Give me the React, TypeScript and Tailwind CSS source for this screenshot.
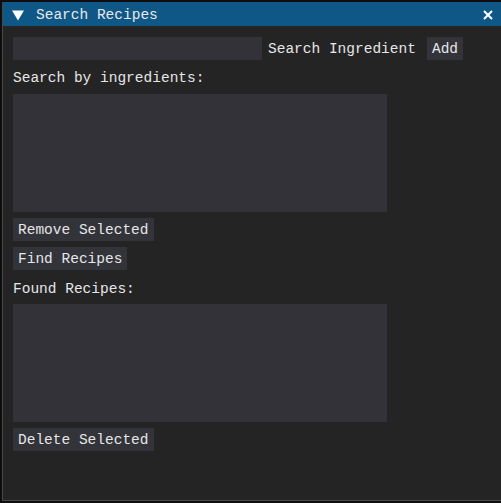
import React from "react";

const font = { fontFamily: '"Liberation Mono", "DejaVu Sans Mono", monospace' };

const Button = ({ label }: { label: string }) => (
  <div className="h-[23px] w-fit px-[5px] pt-[2px] bg-[#33333a] flex items-center text-[14.5px] text-[#e6e6e6]">
    {label}
  </div>
);

const ListBox = () => <div className="w-[374px] h-[118px] bg-[#323238]" />;

export default function App() {
  return (
    <div className="w-[501px] h-[503px] bg-[#0e0e0e] pt-[2px] pl-[2px] overflow-hidden" style={font}>
      <div className="w-[510px] h-[499px] border-l border-b border-[#4a4a4a] bg-[#242424] flex flex-col">
        <div className="h-[24px] bg-[#0f5787] flex items-center pl-[9px] pr-[8px] text-[14.5px] text-[#e8e8e8]">
          <svg width="12" height="11" viewBox="0 0 12 11" className="mt-[2px]">
            <polygon points="0,0.5 12,0.5 6,10.5" fill="#ffffff" />
          </svg>
          <span className="ml-[12px] pt-[4px]">Search Recipes</span>
          <svg width="10" height="10" viewBox="0 0 10 10" className="ml-[325px] mt-[2px]">
            <path d="M1 1 L9 9 M9 1 L1 9" stroke="#ffffff" strokeWidth="2" />
          </svg>
        </div>
        <div className="flex flex-col pl-[10px] pt-[11px] text-[14.5px] text-[#e6e6e6]">
          <div className="flex items-center h-[23px]">
            <div className="w-[249px] h-[23px] bg-[#323238]" />
            <span className="ml-[6px] pt-[2px]">Search Ingredient</span>
            <div className="ml-[11px]">
              <Button label="Add" />
            </div>
          </div>
          <div className="h-[18px] mt-[8px] pt-[3px] flex items-center">Search by ingredients:</div>
          <div className="mt-[8px]">
            <ListBox />
          </div>
          <div className="mt-[6px]">
            <Button label="Remove Selected" />
          </div>
          <div className="mt-[6px]">
            <Button label="Find Recipes" />
          </div>
          <div className="h-[18px] mt-[9px] pt-[3px] flex items-center">Found Recipes:</div>
          <div className="mt-[7px]">
            <ListBox />
          </div>
          <div className="mt-[6px]">
            <Button label="Delete Selected" />
          </div>
        </div>
      </div>
    </div>
  );
}
